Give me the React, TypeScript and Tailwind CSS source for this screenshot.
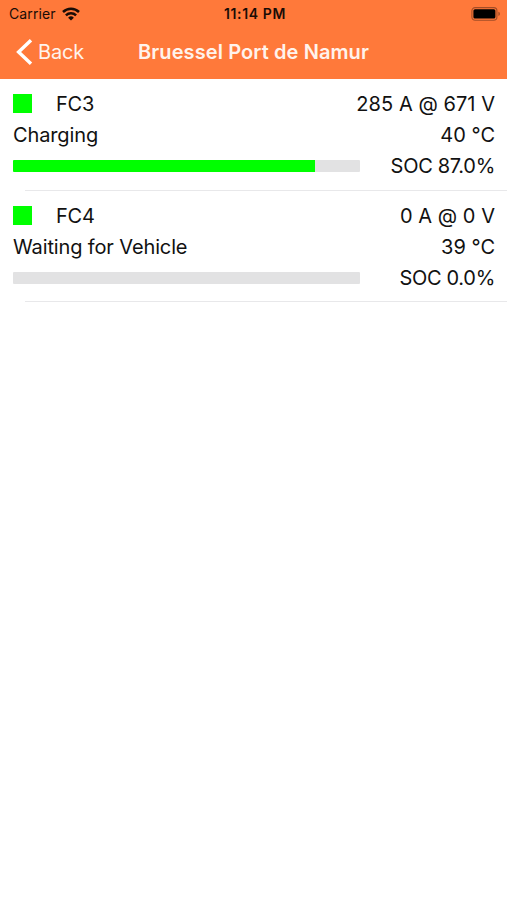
type Connector = {
  id: string;
  status: string;
  current: number;
  voltage: number;
  temperature: number;
  soc: number;
};

const connectors: Connector[] = [
  { id: 'FC3', status: 'Charging', current: 285, voltage: 671, temperature: 40, soc: 87 },
  { id: 'FC4', status: 'Waiting for Vehicle', current: 0, voltage: 0, temperature: 39, soc: 0 },
];

function WifiIcon() {
  return (
    <svg width="18" height="14" viewBox="0 0 18 14" fill="none" stroke="#1a0c06" strokeWidth="2.5">
      <path d="M1 5a11.6 11.6 0 0 1 16 0" />
      <path d="M3.9 8.4a7.4 7.4 0 0 1 10.2 0" />
      <path d="M9 13.4 6.1 10.7a4.2 4.2 0 0 1 5.8 0Z" fill="#1a0c06" stroke="none" />
    </svg>
  );
}

function BatteryIcon() {
  return (
    <svg width="30" height="14" viewBox="0 0 30 14" fill="none">
      <rect x="0.9" y="0.6" width="25" height="12.6" rx="3.2" stroke="#a34d27" strokeWidth="1.1" />
      <rect x="2.4" y="2.2" width="22" height="9.4" rx="1.6" fill="#000" />
      <path d="M27.4 4.8c2 .6 2 3.6 0 4.2Z" fill="#a34d27" />
    </svg>
  );
}

function StatusBar() {
  return (
    <div className="grid grid-cols-3 items-center h-[27px] pl-[9px] pr-[6px] text-[#1a0c06]">
      <div className="flex items-center gap-[6px]">
        <span className="text-[14px] tracking-[0.1px]">Carrier</span>
        <WifiIcon />
      </div>
      <span className="text-center text-[14px] font-semibold tracking-[0.6px]">11:14 PM</span>
      <div className="flex justify-end">
        <BatteryIcon />
      </div>
    </div>
  );
}

function NavBar() {
  return (
    <div className="grid grid-cols-[1fr_auto_1fr] items-center h-[50px] px-[15px] text-white">
      <button className="flex items-center gap-[5px] text-[20px] tracking-[-0.2px] text-[#fff3ec]">
        <svg width="18" height="26" viewBox="0 0 18 26" fill="none" stroke="#fff" strokeWidth="3.4">
          <path d="M16 1.2 3.6 13 16 24.8" />
        </svg>
        Back
      </button>
      <h1 className="text-[20px] font-semibold tracking-[0.1px] text-[#fff3ec]">Bruessel Port de Namur</h1>
    </div>
  );
}

function ConnectorRow({ connector }: { connector: Connector }) {
  return (
    <li className="h-[111.5px] pt-[9.5px]">
      <div className="flex items-center justify-between h-[31px] pl-[13px] pr-[12px]">
        <div className="flex items-center gap-[24px]">
          <span className="w-[19px] h-[19px] mb-[1px] bg-[#00ff00]" />
          <span className="tracking-[-0.2px]">{connector.id}</span>
        </div>
        <span className="tracking-[0.05px]">
          {connector.current} A @ {connector.voltage} V
        </span>
      </div>
      <div className="flex items-center justify-between h-[31px] pl-[13px] pr-[12px]">
        <span className="tracking-[-0.13px]">{connector.status}</span>
        <span>{connector.temperature} °C</span>
      </div>
      <div className="flex items-center justify-between h-[31px] pl-[13px] pr-[12px]">
        <div className="w-[347px] h-[12px] rounded-[1px] overflow-hidden bg-[#e2e2e3]">
          <div className="h-full bg-[#00ff00]" style={{ width: `${connector.soc}%` }} />
        </div>
        <span className="tracking-[-0.3px]">SOC {connector.soc.toFixed(1)}%</span>
      </div>
      <div className="mt-[8px] ml-[25px] h-px bg-[#e8e8ea]" />
    </li>
  );
}

export default function App() {
  return (
    <div className="min-h-screen bg-white font-['Inter','Liberation_Sans',sans-serif]">
      <header className="h-[79px] bg-[#ff793a]">
        <StatusBar />
        <NavBar />
      </header>
      <ul className="text-[20px] text-[#111]">
        {connectors.map((connector) => (
          <ConnectorRow key={connector.id} connector={connector} />
        ))}
      </ul>
    </div>
  );
}
